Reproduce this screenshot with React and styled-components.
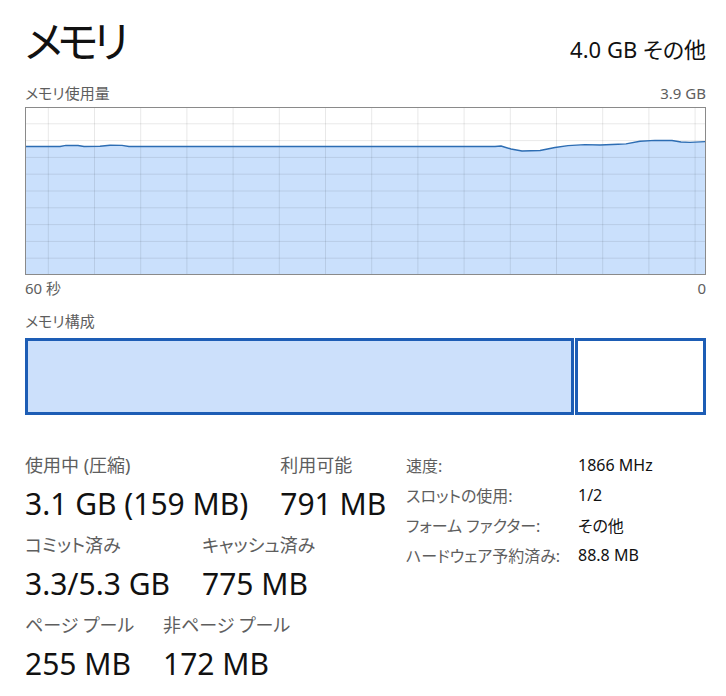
import React from 'react'
import styled, { createGlobalStyle } from 'styled-components'

const GlobalStyle = createGlobalStyle`
  body {
    margin: 0;
    background: #fff;
    font-family: "Noto Sans", "Noto Sans CJK JP", sans-serif;
    font-feature-settings: "palt";
    color: #000;
  }
`

const CHART_W = 681
const CHART_H = 168

// usage history, x/y in chart pixels
const usage = [
  [0, 39.5], [35, 39.5], [41, 38.4], [53, 38.5], [59, 39.5], [75, 39.2], [85, 38.2],
  [97, 38.4], [104, 39.5], [470, 39.5], [476, 39], [486, 42], [497, 44], [515, 43.5],
  [530, 40.5], [543, 38.6], [560, 37.6], [575, 38], [593, 37.2], [601, 36.9],
  [615, 34.2], [630, 33.4], [647, 33.5], [656, 35], [665, 35.4], [681, 34.6],
]

const vLines = Array.from({ length: 15 }, (_, i) => 23.3 + i * 46.2)
const hLines = Array.from({ length: 9 }, (_, i) => (i + 1) * 16.8)

const metricRows = [
  [
    { label: '使用中 (圧縮)', value: '3.1 GB (159 MB)' },
    { label: '利用可能', value: '791 MB' },
  ],
  [
    { label: 'コミット済み', value: '3.3/5.3 GB' },
    { label: 'キャッシュ済み', value: '775 MB' },
  ],
  [
    { label: 'ページ プール', value: '255 MB' },
    { label: '非ページ プール', value: '172 MB' },
  ],
]

const details = [
  ['速度:', '1866 MHz'],
  ['スロットの使用:', '1/2'],
  ['フォーム ファクター:', 'その他'],
  ['ハードウェア予約済み:', '88.8 MB'],
]

// in use / standby, widths of the inner boxes in px
const composition = [
  { size: 543, fill: '#cce0fb' },
  { size: 125, fill: '#fff' },
]

const UsageChart = () => {
  const line = usage.map(([x, y]) => `${x},${y}`).join(' ')
  const area = `0,${CHART_H} ${line} ${CHART_W},${CHART_H}`
  return (
    <ChartFrame>
      <svg width={CHART_W} height={CHART_H} viewBox={`0 0 ${CHART_W} ${CHART_H}`}>
        <polygon points={area} fill="#cae0fc" />
        {vLines.map(x => (
          <line key={`v${x}`} x1={x} x2={x} y1={0} y2={CHART_H} stroke="rgba(0,0,0,0.09)" strokeWidth="1" />
        ))}
        {hLines.map(y => (
          <line key={`h${y}`} x1={0} x2={CHART_W} y1={y} y2={y} stroke="rgba(0,0,0,0.09)" strokeWidth="1" />
        ))}
        <polyline points={line} fill="none" stroke="#2d6db3" strokeWidth="1.4" strokeLinejoin="round" />
      </svg>
    </ChartFrame>
  )
}

const App = () => (
  <Page>
    <GlobalStyle />
    <Header>
      <Title>メモリ</Title>
      <Total>4.0 GB その他</Total>
    </Header>

    <AxisRow>
      <span>メモリ使用量</span>
      <span>3.9 GB</span>
    </AxisRow>
    <UsageChart />
    <AxisRow $below>
      <span>60 秒</span>
      <span>0</span>
    </AxisRow>

    <SectionLabel>メモリ構成</SectionLabel>
    <Composition>
      {composition.map((s, i) => (
        <Segment key={i} $grow={s.size} $fill={s.fill} />
      ))}
    </Composition>

    <Stats>
      <Metrics>
        {metricRows.map((row, i) => (
          <MetricRow key={i}>
            {row.map(m => (
              <Metric key={m.label}>
                <MetricLabel>{m.label}</MetricLabel>
                <MetricValue>{m.value}</MetricValue>
              </Metric>
            ))}
          </MetricRow>
        ))}
      </Metrics>
      <Details>
        {details.map(([k, v]) => (
          <React.Fragment key={k}>
            <DetailKey>{k}</DetailKey>
            <DetailValue>{v}</DetailValue>
          </React.Fragment>
        ))}
      </Details>
    </Stats>
  </Page>
)

const Page = styled.div`
  width: 681px;
  padding: 14px 20px 0 25px;
`
const Header = styled.div`
  display: flex;
  justify-content: space-between;
  align-items: baseline;
  height: 62px;
`
const Title = styled.h1`
  margin: 0;
  font-size: 43px;
  font-weight: 400;
  line-height: 56px;
  letter-spacing: -5px;
  color: #111;
`
const Total = styled.div`
  font-size: 22px;
  color: #111;
`
const AxisRow = styled.div`
  display: flex;
  justify-content: space-between;
  font-size: 15px;
  line-height: 22px;
  color: #5e5e5e;
  margin-top: ${p => (p.$below ? '2px' : '6px')};
  margin-bottom: ${p => (p.$below ? '0' : '3px')};
`
const ChartFrame = styled.div`
  border: 1px solid #8a8a8a;
  height: ${CHART_H - 2}px;
  overflow: hidden;
  svg {
    display: block;
    margin: -1px;
  }
`
const SectionLabel = styled.div`
  font-size: 15px;
  line-height: 22px;
  color: #5e5e5e;
  margin-top: 11px;
`
const Composition = styled.div`
  display: flex;
  gap: 1px;
  height: 77px;
  margin-top: 6px;
`
const Segment = styled.div`
  flex: ${p => p.$grow} 1 0;
  border: 3px solid #1d5db5;
  background: ${p => p.$fill};
`
const Stats = styled.div`
  display: flex;
  margin-top: 35px;
`
const Metrics = styled.div`
  width: 381px;
  padding-top: 3px;
  display: flex;
  flex-direction: column;
  gap: 8px;
`
const MetricRow = styled.div`
  display: flex;
  gap: 32px;
`
const Metric = styled.div`
  display: flex;
  flex-direction: column;
`
/* the value sets the column width; the label may run past it */
const MetricLabel = styled.div`
  width: 0;
  white-space: nowrap;
  font-size: 18px;
  line-height: 24px;
  color: #5e5e5e;
`
const MetricValue = styled.div`
  margin-top: 6px;
  font-size: 30px;
  line-height: 42px;
  white-space: nowrap;
  color: #111;
`
const Details = styled.div`
  display: grid;
  grid-template-columns: 172px auto;
  grid-auto-rows: 30px;
  align-items: center;
  font-size: 16px;
`
const DetailKey = styled.div`
  color: #5e5e5e;
`
const DetailValue = styled.div`
  color: #111;
`

export default App
